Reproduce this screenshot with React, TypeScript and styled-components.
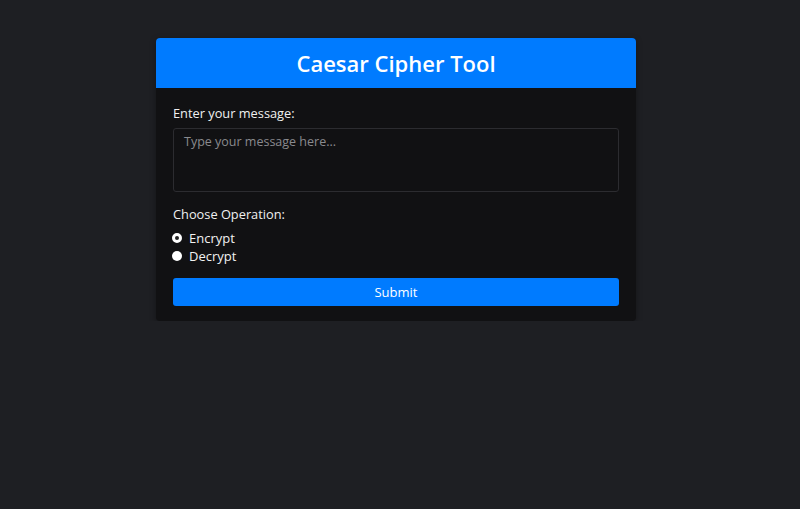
import React, { useState } from 'react';
import styled, { createGlobalStyle } from 'styled-components';

const GlobalStyle = createGlobalStyle`
  html, body {
    background-color: #1e1f23;
  }
  body {
    margin: 8px;
    font-family: "Open Sans", "Noto Sans", sans-serif;
    color: #f2f2f2;
  }
`;

const Page = styled.div`
  padding: 30px 8px 0 0;
`;

const Card = styled.div`
  width: 480px;
  margin: 0 auto;
  background-color: #111113;
  border-radius: 4px;
  overflow: hidden;
  box-shadow: 0 2px 6px rgba(0, 0, 0, 0.35);
`;

const Header = styled.div`
  height: 50px;
  background-color: #007bff;
  display: flex;
  align-items: center;
  justify-content: center;
`;

const Title = styled.h1`
  margin: 0;
  font-size: 22px;
  font-weight: 600;
  color: #ffffff;
`;

const Body = styled.form`
  padding: 16px 17px 15px;
  display: flex;
  flex-direction: column;
`;

const Label = styled.label`
  font-size: 12.8px;
  line-height: 18px;
  color: #f0f0f0;
  margin-bottom: 6px;
`;

const MessageInput = styled.textarea`
  height: 64px;
  box-sizing: border-box;
  resize: none;
  background-color: #111113;
  border: 1px solid #2c2c30;
  border-radius: 3px;
  padding: 4px 10px;
  font-family: inherit;
  font-size: 12.5px;
  line-height: 17px;
  color: #e8e8e8;
  outline: none;
  margin-bottom: 13px;

  &::placeholder {
    color: #8a8a8e;
  }
`;

const RadioRow = styled.label`
  display: flex;
  align-items: center;
  gap: 7px;
  font-size: 13px;
  height: 18px;
`;

const Radio = styled.input`
  appearance: none;
  margin: 0 0 0 -1px;
  width: 10px;
  height: 10px;
  border-radius: 50%;
  background-color: #ffffff;
  box-sizing: border-box;

  &:checked {
    border: 3px solid #ffffff;
    background-color: #222;
  }
`;

const Options = styled.div`
  display: flex;
  flex-direction: column;
  margin-bottom: 13px;
`;

const SubmitButton = styled.button`
  height: 28px;
  border: none;
  border-radius: 3px;
  background-color: #007bff;
  color: #ffffff;
  font-family: inherit;
  font-size: 13px;
  cursor: pointer;
`;

const App: React.FC = () => {
  const [mode, setMode] = useState<'encrypt' | 'decrypt'>('encrypt');
  const [message, setMessage] = useState('');

  return (
    <>
      <GlobalStyle />
      <Page>
        <Card>
          <Header>
            <Title>Caesar Cipher Tool</Title>
          </Header>
          <Body onSubmit={e => e.preventDefault()}>
            <Label htmlFor="msg">Enter your message:</Label>
            <MessageInput
              id="msg"
              placeholder="Type your message here..."
              value={message}
              onChange={e => setMessage(e.target.value)}
            />
            <Label as="div">Choose Operation:</Label>
            <Options>
              <RadioRow>
                <Radio
                  type="radio"
                  name="op"
                  checked={mode === 'encrypt'}
                  onChange={() => setMode('encrypt')}
                />
                Encrypt
              </RadioRow>
              <RadioRow>
                <Radio
                  type="radio"
                  name="op"
                  checked={mode === 'decrypt'}
                  onChange={() => setMode('decrypt')}
                />
                Decrypt
              </RadioRow>
            </Options>
            <SubmitButton type="submit">Submit</SubmitButton>
          </Body>
        </Card>
      </Page>
    </>
  );
};

export default App;
